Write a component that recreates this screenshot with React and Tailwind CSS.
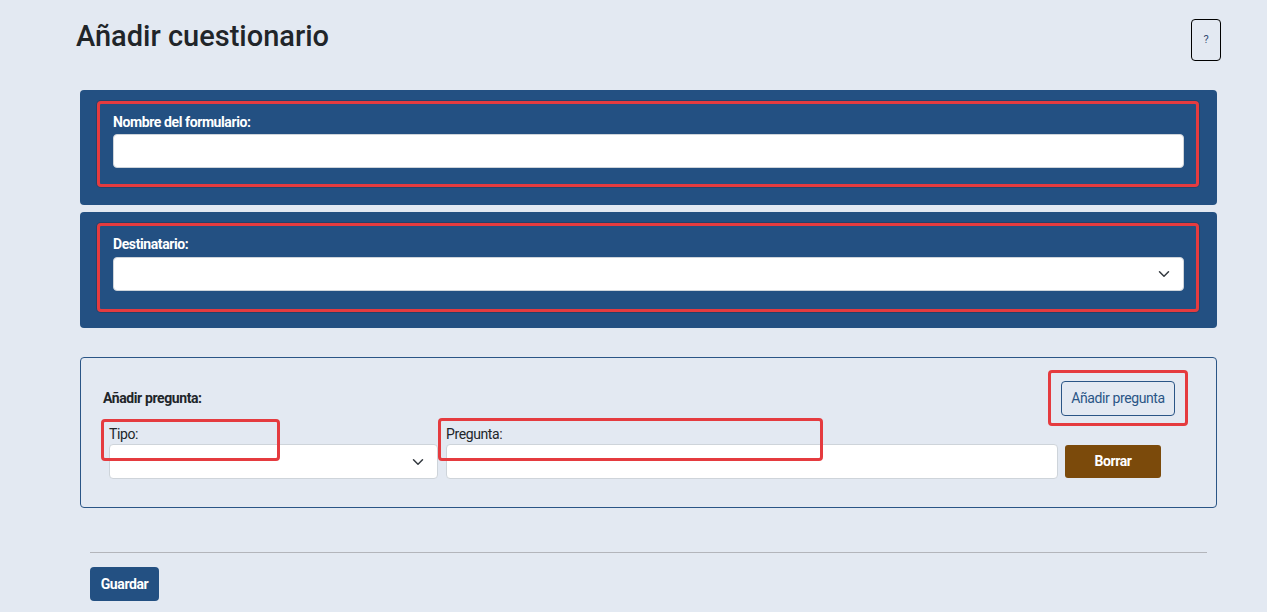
import React from "react";

const Chevron = () => (
  <svg width="12" height="12" viewBox="0 0 16 16" fill="none" stroke="#343a40" strokeWidth="2" strokeLinecap="round" strokeLinejoin="round">
    <path d="M2 5l6 6 6-6" />
  </svg>
);

export default function App() {
  const cond = "font-['Roboto',sans-serif] tracking-[-0.4px]";
  return (
    <div className="min-h-[612px] w-full bg-[#e3e9f2] font-['Roboto',sans-serif] text-[#212529]">
      {/* header */}
      <div className="flex items-start justify-between pl-[76px] pr-[46px] pt-[19px]">
        <h1 className="mt-[-1px] text-[29px] font-medium leading-[36px] text-[#212529]">Añadir cuestionario</h1>
        <button className="flex h-[42px] w-[30px] items-center justify-center rounded-[4px] border-[1.5px] border-black text-[11px] text-[#344a73]">?</button>
      </div>

      <div className="ml-[80px] mt-[29px] w-[1137px]">
        {/* panel 1 */}
        <div className="rounded-[4px] bg-[#235082] pb-[18px] pl-[17px] pr-[18px] pt-[11px]">
          <div className="rounded-[4px] border-[3px] border-[#e53b3f] pb-[16px] pl-[13px] pr-[12px] pt-[8px] shadow-[0_0_0_1px_rgba(40,40,60,0.35)]">
            <label className={`block text-[14px] font-bold leading-[20px] text-white ${cond}`}>Nombre del formulario:</label>
            <div className="mt-[2px] h-[34px] rounded-[4px] border border-[#ced4da] bg-white" />
          </div>
        </div>

        {/* panel 2 */}
        <div className="mt-[7px] rounded-[4px] bg-[#235082] pb-[16px] pl-[17px] pr-[18px] pt-[11px]">
          <div className="rounded-[4px] border-[3px] border-[#e53b3f] pb-[18px] pl-[13px] pr-[12px] pt-[8px] shadow-[0_0_0_1px_rgba(40,40,60,0.35)]">
            <label className={`block text-[14px] font-bold leading-[20px] text-white ${cond}`}>Destinatario:</label>
            <div className="mt-[3px] flex h-[34px] items-center justify-end rounded-[4px] border border-[#ced4da] bg-white pr-[13px]">
              <Chevron />
            </div>
          </div>
        </div>

        {/* section 3 */}
        <div className="relative mt-[29px] rounded-[4px] border border-[#2a5586] pb-[28px] pt-[12px]">
          <div className="flex items-center justify-between pl-[22px] pr-[28px]">
            <span className={`text-[14px] font-bold leading-[20px] text-[#212529] ${cond}`}>Añadir pregunta:</span>
            <div className="rounded-[4px] border-[3px] border-[#e53b3f] px-[10px] py-[7.5px]">
              <button className={`h-[35px] w-[114px] rounded-[4px] border border-[#2a5586] text-[14px] text-[#2a5586] ${cond}`}>Añadir pregunta</button>
            </div>
          </div>
          <div className="-mt-[2px] flex items-end pl-[28px]">
            <div className="w-[329px]">
              <label className={`block text-[14px] leading-[20px] text-[#212529] ${cond}`}>Tipo:</label>
              <div className="flex h-[35px] items-center justify-end rounded-[4px] border border-[#ced4da] bg-white pr-[13px]">
                <Chevron />
              </div>
            </div>
            <div className="ml-[8px] w-[612px]">
              <label className={`block text-[14px] leading-[20px] text-[#212529] ${cond}`}>Pregunta:</label>
              <div className="h-[35px] rounded-[4px] border border-[#ced4da] bg-white" />
            </div>
            <button className={`mb-[1px] ml-[7px] h-[33px] w-[96px] rounded-[3px] bg-[#7b4a0b] text-[14px] font-bold text-white ${cond}`}>Borrar</button>
          </div>

          {/* annotation overlays */}
          <div className="pointer-events-none absolute left-[20px] top-[61px] h-[42px] w-[179px] rounded-[4px] border-[3px] border-[#e53b3f]" />
          <div className="pointer-events-none absolute left-[357px] top-[60px] h-[43px] w-[385px] rounded-[4px] border-[3px] border-[#e53b3f]" />
        </div>
      </div>

      {/* footer */}
      <div className="ml-[90px] mt-[44px] w-[1117px] border-t border-[#b3b5bb]" />
      <div className="ml-[90px] mt-[14px] pb-[11px]">
        <button className={`h-[34px] w-[69px] rounded-[4px] bg-[#235082] text-[14px] font-bold text-white ${cond}`}>Guardar</button>
      </div>
    </div>
  );
}
